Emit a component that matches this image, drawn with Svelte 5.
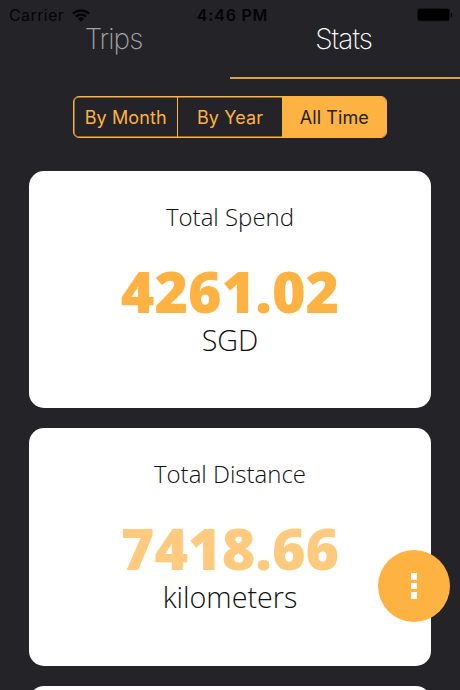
<script lang="ts">
  type Stat = { title: string; value: string; unit: string; faded?: boolean };

  const tabs = ['Trips', 'Stats'];
  const ranges = ['By Month', 'By Year', 'All Time'];
  const stats: Stat[] = [
    { title: 'Total Spend', value: '4261.02', unit: 'SGD' },
    { title: 'Total Distance', value: '7418.66', unit: 'kilometers', faded: true },
  ];

  let activeTab = $state('Stats');
  let activeRange = $state('All Time');
</script>

<div class="screen">
  <div class="status-bar">
    <div class="status-left">
      <span class="carrier">Carrier</span>
      <svg class="wifi" width="18" height="13" viewBox="0 0 18 13">
        <path d="M1 4.7a11.6 11.6 0 0 1 16 0" />
        <path d="M3.9 7.7a7.4 7.4 0 0 1 10.2 0" />
        <path class="wifi-dot" d="M9 12.8 6 9.8a4.3 4.3 0 0 1 6 0z" />
      </svg>
    </div>
    <span class="clock">4:46 PM</span>
    <div class="status-right">
      <svg width="36" height="14" viewBox="0 0 36 14">
        <rect x="0.5" y="0.5" width="32" height="12.5" rx="2.5" fill="#000" stroke="#151517" />
        <path d="M33.8 4.5c1.8.8 1.8 4.2 0 5z" fill="#000" />
      </svg>
    </div>
  </div>

  <nav class="tabs">
    {#each tabs as tab}
      <button type="button" class="tab" class:active={activeTab === tab} onclick={() => (activeTab = tab)}>
        {tab}
      </button>
    {/each}
  </nav>

  <div class="segments">
    {#each ranges as range}
      <button
        type="button"
        class="segment"
        class:selected={activeRange === range}
        onclick={() => (activeRange = range)}
      >
        {range}
      </button>
    {/each}
  </div>

  <main class="cards">
    {#each stats as stat}
      <section class="card">
        <h2 class="card-title">{stat.title}</h2>
        <p class="card-value" class:faded={stat.faded}>{stat.value}</p>
        <p class="card-unit">{stat.unit}</p>
      </section>
    {/each}
    <section class="card"></section>
  </main>

  <button type="button" class="fab" aria-label="More">
    <span class="fab-dot"></span>
    <span class="fab-dot"></span>
    <span class="fab-dot"></span>
  </button>
</div>

<style>
  :global(body) {
    margin: 0;
    background: #242328;
  }

  .screen {
    position: relative;
    width: 460px;
    height: 690px;
    overflow: hidden;
    background: #242328;
    display: flex;
    flex-direction: column;
  }

  button {
    margin: 0;
    padding: 0;
    border: none;
    background: none;
    cursor: pointer;
  }

  .status-bar {
    flex: none;
    display: grid;
    grid-template-columns: 1fr auto 1fr;
    align-items: center;
    box-sizing: border-box;
    height: 24px;
    padding: 6px 7px 0 9px;
    font-family: Inter, sans-serif;
    font-size: 16px;
    line-height: 18px;
    color: #050506;
  }

  .status-left {
    display: flex;
    align-items: center;
    gap: 8px;
  }

  .carrier {
    letter-spacing: 0.4px;
  }

  .wifi {
    fill: none;
    stroke: #050506;
    stroke-width: 2.3;
  }

  .wifi-dot {
    fill: #050506;
    stroke: none;
  }

  .clock {
    padding-left: 3px;
    font-weight: 600;
    letter-spacing: 0.8px;
  }

  .status-right {
    display: flex;
    justify-content: flex-end;
  }

  .tabs {
    flex: none;
    display: flex;
    height: 55px;
  }

  .tab {
    flex: 1;
    box-sizing: border-box;
    padding: 0 3px 23px 0;
    border-bottom: 2px solid transparent;
    font-family: Inter, sans-serif;
    font-size: 28px;
    font-weight: 200;
    line-height: 30px;
    letter-spacing: -1px;
    color: #a3a3a6;
  }

  .tab.active {
    color: #fff;
    border-bottom-color: #dca23f;
  }

  .segments {
    flex: none;
    display: flex;
    align-self: center;
    box-sizing: border-box;
    width: 314px;
    height: 42px;
    margin-top: 17px;
    border: 1px solid #fdb242;
    border-radius: 6px;
    box-shadow: inset 0 0 0 0.5px #fdb242;
    overflow: hidden;
  }

  .segment {
    flex: 1;
    font-family: Inter, sans-serif;
    font-size: 18px;
    letter-spacing: 0.1px;
    color: #fdb242;
  }

  .segment + .segment {
    border-left: 1px solid #fdb242;
  }

  .segment.selected {
    background: #fdb242;
    color: #242328;
  }

  .cards {
    display: flex;
    flex-direction: column;
    gap: 20px;
    padding: 33px 29px 0;
  }

  .card {
    flex: none;
    box-sizing: border-box;
    height: 237.3px;
    padding-top: 29px;
    border-radius: 15px;
    background: #fff;
    text-align: center;
    font-family: 'Open Sans', sans-serif;
    color: #111;
  }

  .card-title {
    margin: 0;
    font-size: 24px;
    font-weight: 300;
    line-height: 34px;
  }

  .card-value {
    margin: 28px 0 0;
    font-size: 57.4px;
    font-weight: 800;
    line-height: 58px;
    color: #fdb242;
  }

  .card-value.faded {
    color: #fdca7e;
  }

  .card-unit {
    margin: 1px 0 0;
    font-size: 28.7px;
    font-weight: 300;
    line-height: 38px;
  }

  .fab {
    position: absolute;
    right: 10px;
    bottom: 68px;
    width: 72px;
    height: 72px;
    border-radius: 50%;
    background: #fdb242;
    display: flex;
    flex-direction: column;
    align-items: center;
    justify-content: center;
    gap: 3px;
  }

  .fab-dot {
    width: 6px;
    height: 6.5px;
    background: #fff;
  }
</style>
